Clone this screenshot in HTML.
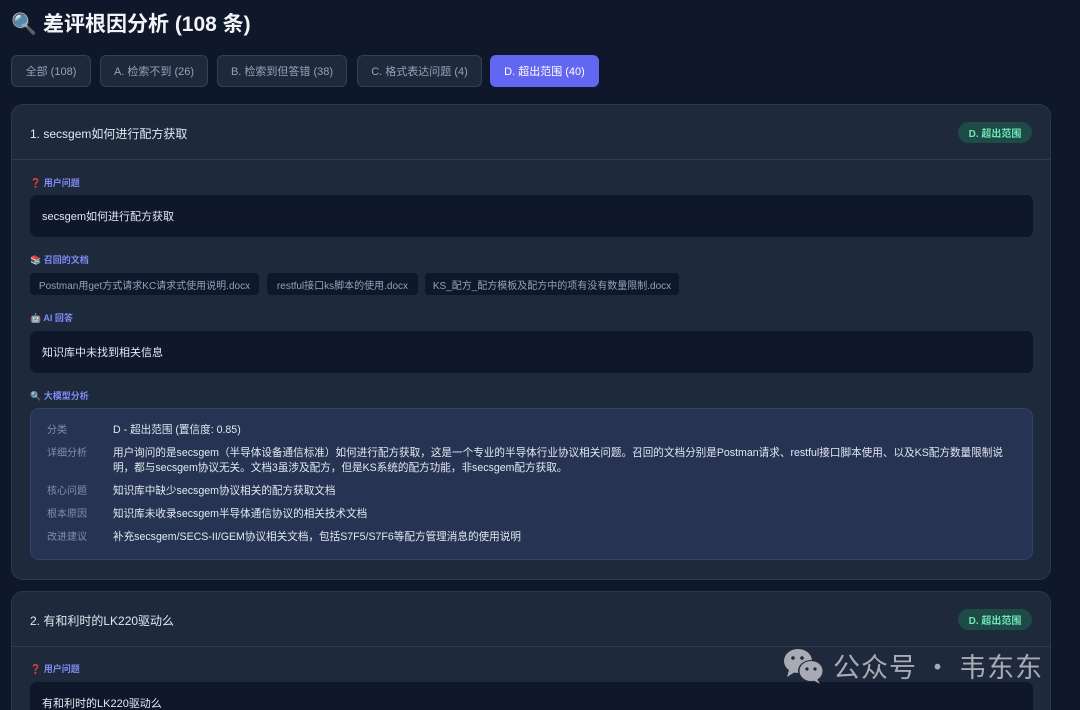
<!DOCTYPE html>
<html><head><meta charset="utf-8"><style>
*{margin:0;padding:0;box-sizing:border-box}
html,body{width:1080px;height:710px;overflow:hidden}
body{background:#0f172a;font-family:"Liberation Sans","Noto Sans CJK SC",sans-serif;color:#e2e8f0;position:relative}
.a{position:absolute}
h1{position:absolute;left:11px;top:8px;font-size:21px;font-weight:bold;color:#f1f5f9;white-space:nowrap}
.tab{position:absolute;top:55px;height:32px;border:1px solid #334155;background:#1e293b;border-radius:6px;font-size:11px;color:#94a3b8;display:flex;align-items:center;justify-content:center}
.tab.on{background:#6366f1;border-color:#6366f1;color:#fff}
.card{position:absolute;left:11px;width:1040px;background:#1e293b;border:1px solid #2b374a;border-radius:12px;overflow:hidden}
.ct{position:absolute;left:18px;font-size:12px;color:#e2e8f0}
.badge{position:absolute;right:18px;width:74px;height:21px;border-radius:11px;background:#1e4a47;color:#6ee7b7;font-size:10px;font-weight:bold;display:flex;align-items:center;justify-content:center}
.hr{position:absolute;left:0;right:0;height:1px;background:#2f3b4f}
.lab{position:absolute;left:18px;font-size:9px;font-weight:bold;color:#818cf8;white-space:nowrap}
.box{position:absolute;left:18px;width:1003px;height:42px;background:#0f172a;border-radius:7px;font-size:11px;color:#e2e8f0;padding-left:12px;display:flex;align-items:center}
.chip{position:absolute;height:22px;background:#0f172a;border-radius:4px;font-size:10px;color:#94a3b8;display:flex;align-items:center;justify-content:center;white-space:nowrap}
.an{position:absolute;left:18px;top:303px;width:1003px;height:152px;background:#273352;border:1px solid #34416a;border-radius:9px}
.k{position:absolute;left:16px;font-size:10px;line-height:15px;color:#8391a8}
.v{position:absolute;left:82px;font-size:10.6px;color:#e2e8f0;line-height:15px;width:900px}
</style></head><body>
<h1>🔍 差评根因分析 (108 条)</h1>
<div class="tab" style="left:11px;width:80px">全部 (108)</div>
<div class="tab" style="left:100px;width:108px">A. 检索不到 (26)</div>
<div class="tab" style="left:217px;width:130px">B. 检索到但答错 (38)</div>
<div class="tab" style="left:357px;width:125px">C. 格式表达问题 (4)</div>
<div class="tab on" style="left:490px;width:109px">D. 超出范围 (40)</div>

<div class="card" style="top:104px;height:476px">
<div class="ct" style="top:20px">1. secsgem如何进行配方获取</div>
<div class="badge" style="top:17px">D. 超出范围</div>
<div class="hr" style="top:54px"></div>
<div class="lab" style="top:71px"><span style="color:#dc2626">❓</span> 用户问题</div>
<div class="box" style="top:90px">secsgem如何进行配方获取</div>
<div class="lab" style="top:148px">📚 召回的文档</div>
<div class="chip" style="left:18px;top:168px;width:229px">Postman用get方式请求KC请求式使用说明.docx</div>
<div class="chip" style="left:255px;top:168px;width:151px">restful接口ks脚本的使用.docx</div>
<div class="chip" style="left:413px;top:168px;width:254px">KS_配方_配方模板及配方中的项有没有数量限制.docx</div>
<div class="lab" style="top:206px">🤖 AI 回答</div>
<div class="box" style="top:226px">知识库中未找到相关信息</div>
<div class="lab" style="top:284px">🔍 大模型分析</div>
<div class="an">
<div class="k" style="top:14px">分类</div><div class="v" style="top:14px">D - 超出范围 (置信度: 0.85)</div>
<div class="k" style="top:37px">详细分析</div><div class="v" style="top:37px">用户询问的是secsgem（半导体设备通信标准）如何进行配方获取，这是一个专业的半导体行业协议相关问题。召回的文档分别是Postman请求、restful接口脚本使用、以及KS配方数量限制说明，都与secsgem协议无关。文档3虽涉及配方，但是KS系统的配方功能，非secsgem配方获取。</div>
<div class="k" style="top:75px">核心问题</div><div class="v" style="top:75px">知识库中缺少secsgem协议相关的配方获取文档</div>
<div class="k" style="top:98px">根本原因</div><div class="v" style="top:98px">知识库未收录secsgem半导体通信协议的相关技术文档</div>
<div class="k" style="top:121px">改进建议</div><div class="v" style="top:121px">补充secsgem/SECS-II/GEM协议相关文档，包括S7F5/S7F6等配方管理消息的使用说明</div>
</div>
</div>

<div class="card" style="top:591px;height:140px">
<div class="ct" style="top:20px">2. 有和利时的LK220驱动么</div>
<div class="badge" style="top:17px">D. 超出范围</div>
<div class="hr" style="top:54px"></div>
<div class="lab" style="top:70px"><span style="color:#dc2626">❓</span> 用户问题</div>
<div class="box" style="top:90px">有和利时的LK220驱动么</div>
</div>

<svg class="a" style="left:783px;top:648px" width="42" height="36" viewBox="0 0 42 36">
<ellipse cx="15" cy="13" rx="14" ry="12" fill="#a8abb3"/><path d="M6 22 L4 29 L12 24Z" fill="#a8abb3"/>
<ellipse cx="28" cy="23" rx="13" ry="11" fill="#1e293b"/>
<ellipse cx="28" cy="23" rx="11.5" ry="10" fill="#a8abb3"/><path d="M34 31 L37 36 L30 32Z" fill="#a8abb3"/>
<circle cx="10" cy="10" r="1.8" fill="#1e293b"/><circle cx="19" cy="10" r="1.8" fill="#1e293b"/>
<circle cx="24" cy="21" r="1.6" fill="#1e293b"/><circle cx="32" cy="21" r="1.6" fill="#1e293b"/>
</svg>
<div class="a" style="left:833px;top:646px;font-size:27px;letter-spacing:1px;color:#a8abb3;font-family:'Noto Sans CJK SC',sans-serif;white-space:nowrap">公众号 · 韦东东</div>
</body></html>
